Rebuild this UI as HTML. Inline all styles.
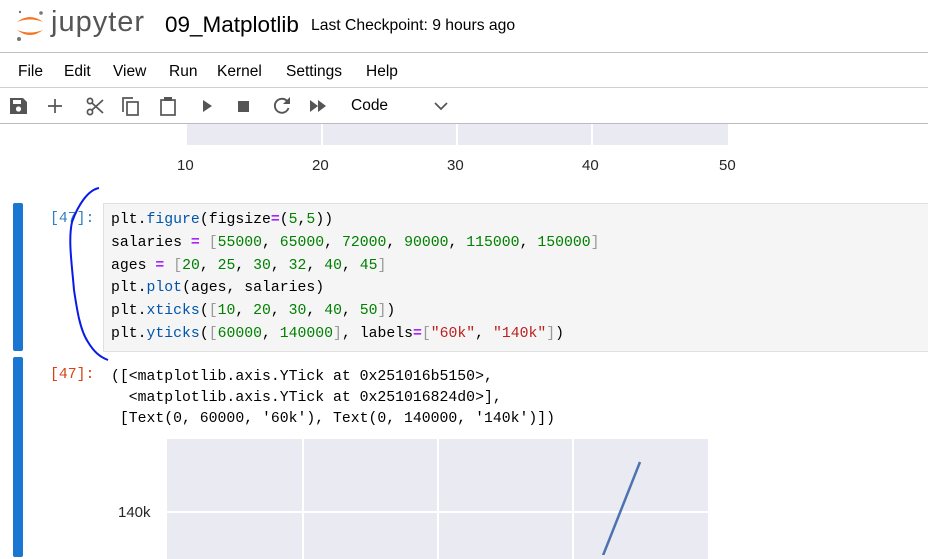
<!DOCTYPE html>
<html><head><style>
body{margin:0;width:928px;height:555px;overflow:hidden;background:#fff;font-family:"Liberation Sans",sans-serif;position:relative}
.a{position:absolute}
.mono{font-family:"Liberation Mono",monospace;font-size:14.8px;white-space:pre}
.k{color:#0055aa}.n{color:#008000}.p{color:#aa22ff;font-weight:bold}.s{color:#ba2121}.br{color:#999}
.m{position:absolute;top:63px;font-size:15.5px;color:#000}
</style></head><body>
<svg class="a" style="left:14px;top:8px" width="32" height="36" viewBox="0 0 32 36">
<path d="M3 14 Q16 4 29 14 Q16 9 3 14Z" fill="#f37726"/>
<path d="M3 22 Q16 32 29 22 Q16 27 3 22Z" fill="#f37726"/>
<circle cx="27" cy="5" r="1.8" fill="#767677"/><circle cx="5" cy="31" r="2" fill="#767677"/><circle cx="6" cy="4" r="1.2" fill="#767677"/>
</svg>
<div class="a" style="left:51px;top:6px;font-size:29px;color:#555;letter-spacing:1px">jupyter</div>
<div class="a" style="left:165px;top:12px;font-size:22.5px;color:#000">09_Matplotlib</div>
<div class="a" style="left:311px;top:17px;font-size:15.7px;color:#000">Last Checkpoint: 9 hours ago</div>
<div class="a" style="left:0;top:52px;width:928px;height:1px;background:#c0c0c0"></div>
<div class="m" style="left:18px">File</div><div class="m" style="left:64px">Edit</div><div class="m" style="left:113px">View</div><div class="m" style="left:169px">Run</div><div class="m" style="left:217px">Kernel</div><div class="m" style="left:286px">Settings</div><div class="m" style="left:366px">Help</div>
<div class="a" style="left:0;top:87px;width:928px;height:1px;background:#d0d0d0"></div>
<svg class="a" style="left:0;top:92px" width="460" height="28" fill="#555" stroke="#555">
<path d="M10 6h13l4 4v12H10z" stroke="none"/><rect x="13" y="8" width="8" height="4" fill="#fff" stroke="none"/><circle cx="18.5" cy="17" r="2.6" fill="#fff" stroke="none"/>
<path d="M55 7v14M48 14h14" stroke-width="1.7" fill="none"/>
<circle cx="90" cy="20" r="2.6" fill="none" stroke-width="1.7"/><circle cx="90" cy="9" r="2.6" fill="none" stroke-width="1.7"/><path d="M92 11l11 10M92 18l11-10" stroke-width="1.7" fill="none"/>
<rect x="127" y="10" width="11" height="13" fill="none" stroke-width="1.7"/><path d="M123 20V6h10" fill="none" stroke-width="1.7"/>
<rect x="161" y="8" width="14" height="15" fill="none" stroke-width="1.7"/><rect x="164" y="5" width="8" height="4" stroke="none"/>
<path d="M203 8l9 6-9 6z" stroke="none"/>
<rect x="238" y="9" width="11" height="11" stroke="none"/>
<path d="M287 9a7 7 0 1 0 1.5 7" fill="none" stroke-width="1.9"/><path d="M290 5v7h-7z" stroke="none"/>
<path d="M310 8l8 6-8 6zM318 8l8 6-8 6z" stroke="none"/>
<path d="M435 11l6 6 6-6" fill="none" stroke-width="1.7"/>
</svg>
<div class="a" style="left:351px;top:97px;font-size:15.5px;color:#000">Code</div>
<div class="a" style="left:0;top:123px;width:928px;height:1px;background:#bbb"></div>
<div class="a" style="left:187px;top:124px;width:541px;height:21px;background:#eaeaf2"></div>
<div class="a" style="left:321px;top:124px;width:2px;height:21px;background:#fff"></div>
<div class="a" style="left:456px;top:124px;width:2px;height:21px;background:#fff"></div>
<div class="a" style="left:591px;top:124px;width:2px;height:21px;background:#fff"></div>
<div class="a" style="top:157px;font-size:15px;color:#262626;left:177px">10</div>
<div class="a" style="top:157px;font-size:15px;color:#262626;left:312px">20</div>
<div class="a" style="top:157px;font-size:15px;color:#262626;left:447px">30</div>
<div class="a" style="top:157px;font-size:15px;color:#262626;left:582px">40</div>
<div class="a" style="top:157px;font-size:15px;color:#262626;left:719px">50</div>

<div class="a" style="left:13px;top:203px;width:10px;height:148px;background:#1976d2;border-radius:2px"></div>
<div class="a mono" style="left:50px;top:211px;color:#307fc1">[47]:</div>
<div class="a" style="left:103px;top:203px;width:830px;height:147px;background:#f5f5f5;border:1px solid #e0e0e0"></div>
<div class="a mono" style="left:111px;top:209px;line-height:22.8px;color:#000">plt.<span class="k">figure</span>(figsize<span class="p">=</span>(<span class="n">5</span>,<span class="n">5</span>))
salaries <span class="p">=</span> <span class="br">[</span><span class="n">55000</span>, <span class="n">65000</span>, <span class="n">72000</span>, <span class="n">90000</span>, <span class="n">115000</span>, <span class="n">150000</span><span class="br">]</span>
ages <span class="p">=</span> <span class="br">[</span><span class="n">20</span>, <span class="n">25</span>, <span class="n">30</span>, <span class="n">32</span>, <span class="n">40</span>, <span class="n">45</span><span class="br">]</span>
plt.<span class="k">plot</span>(ages, salaries)
plt.<span class="k">xticks</span>(<span class="br">[</span><span class="n">10</span>, <span class="n">20</span>, <span class="n">30</span>, <span class="n">40</span>, <span class="n">50</span><span class="br">]</span>)
plt.<span class="k">yticks</span>(<span class="br">[</span><span class="n">60000</span>, <span class="n">140000</span><span class="br">]</span>, labels<span class="p">=</span><span class="br">[</span><span class="s">"60k"</span>, <span class="s">"140k"</span><span class="br">]</span>)</div>

<div class="a" style="left:13px;top:357px;width:10px;height:200px;background:#1976d2;border-radius:2px"></div>
<div class="a mono" style="left:50px;top:367px;color:#d84315">[47]:</div>
<div class="a mono" style="left:111px;top:367px;line-height:21px;color:#000">([&lt;matplotlib.axis.YTick at 0x251016b5150&gt;,
  &lt;matplotlib.axis.YTick at 0x251016824d0&gt;],
 [Text(0, 60000, '60k'), Text(0, 140000, '140k')])</div>

<div class="a" style="left:167px;top:439px;width:541px;height:120px;background:#eaeaf2"></div>
<div class="a" style="left:302px;top:439px;width:2px;height:120px;background:#fff"></div>
<div class="a" style="left:437px;top:439px;width:2px;height:120px;background:#fff"></div>
<div class="a" style="left:572px;top:439px;width:2px;height:120px;background:#fff"></div>
<div class="a" style="left:167px;top:511px;width:541px;height:2px;background:#fff"></div>
<div class="a" style="left:118px;top:504px;font-size:15px;color:#262626">140k</div>
<svg class="a" style="left:0;top:0" width="928" height="555">
<path d="M640 462L602 558" stroke="#4c72b0" stroke-width="2.5" fill="none"/>
<path d="M99 188C88 190 78 205 72 222C68 240 72 265 74 290C77 310 80 330 88 342C94 352 100 357 108 360" stroke="#0a1ae6" stroke-width="2" fill="none"/>
</svg>
</body></html>
